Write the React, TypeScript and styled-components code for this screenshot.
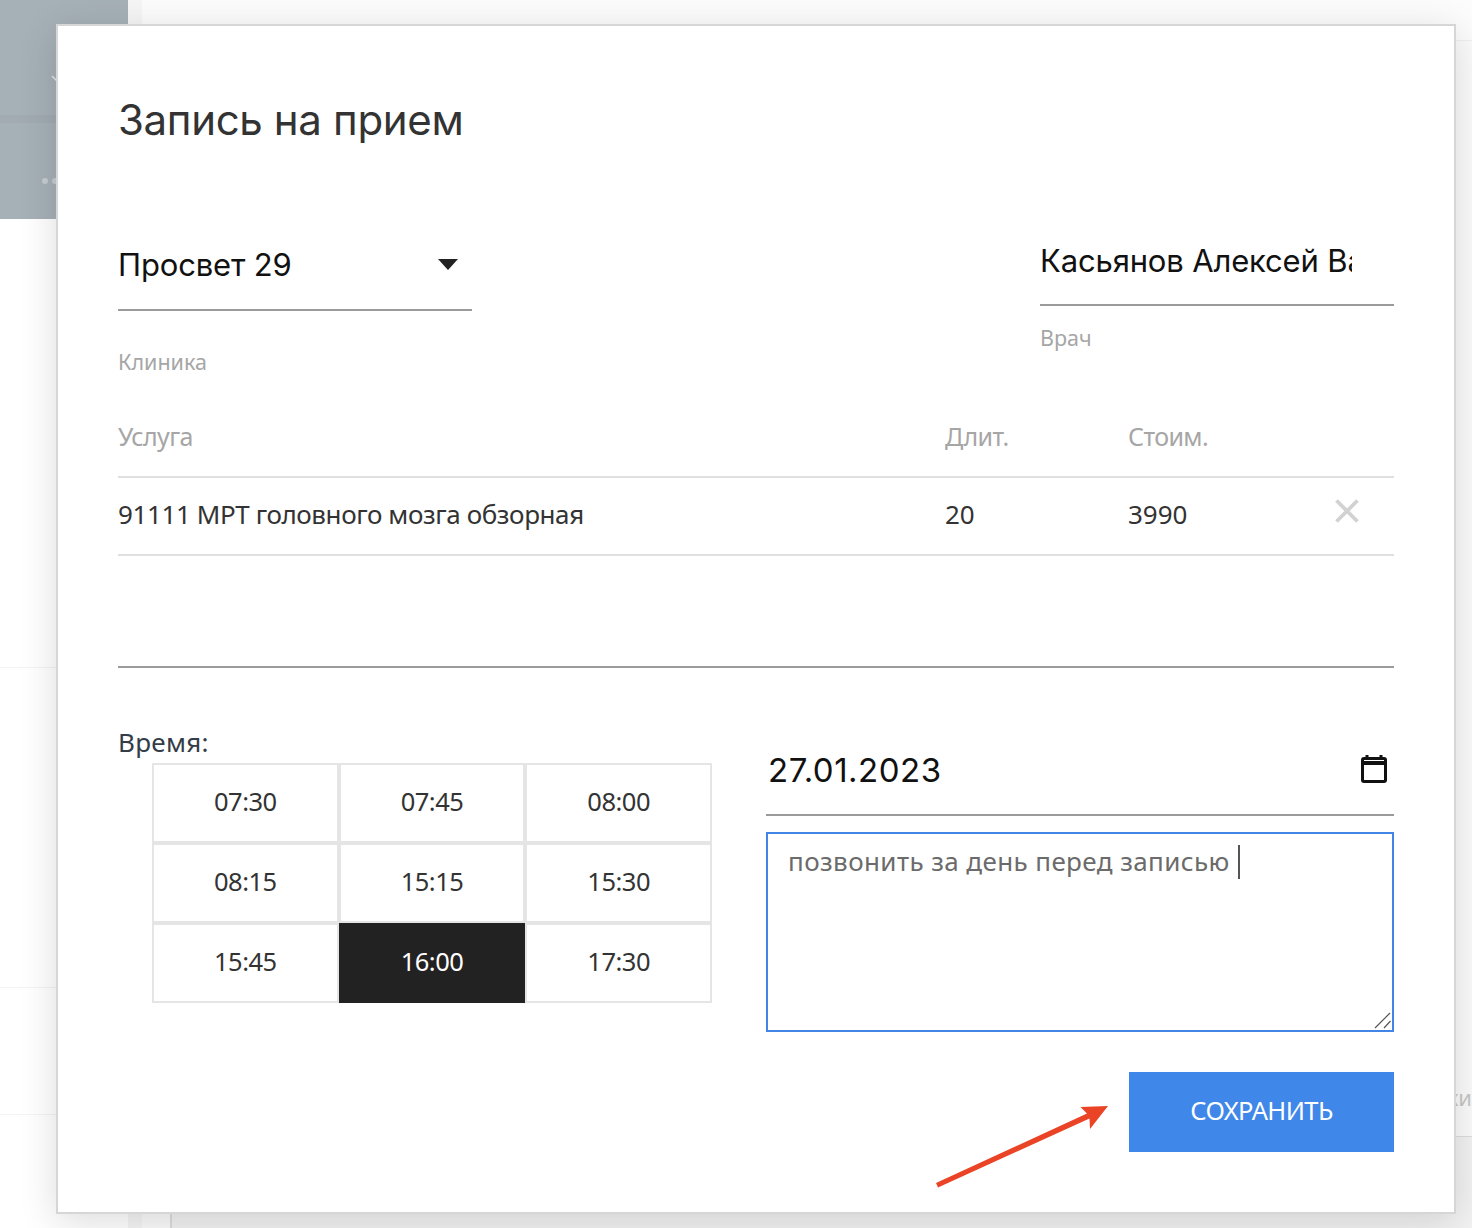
import React from "react";
import styled, { createGlobalStyle } from "styled-components";

const Global = createGlobalStyle`
  html, body { margin: 0; padding: 0; background: #fbfbfb; }
  * { box-sizing: border-box; }
`;

const body = `"Noto Sans", "Open Sans", sans-serif`;
const ui = `Inter, Roboto, sans-serif`;

const Page = styled.div`
  position: relative;
  width: 1472px;
  height: 1228px;
  overflow: hidden;
  font-family: ${body};
`;

const Backdrop = styled.div`
  display: grid;
  grid-template-columns: 128px 14px 1fr;
  height: 100%;
`;

const Sidebar = styled.div`
  display: flex;
  flex-direction: column;
  background: #fff;
`;

const SidePanel = styled.div`
  height: 219px;
  background: #a6b0b7;
  padding: 75px 0 0 42px;
  display: flex;
  flex-direction: column;
`;

const Chevron = styled.svg`
  display: block;
  margin-left: 9px;
`;

const SideBand = styled.div`
  height: 8px;
  margin: 32px -42px 0 -42px;
  background: #a1abb1;
`;

const Dots = styled.div`
  display: flex;
  gap: 4px;
  margin-top: 55px;
`;

const Dot = styled.span`
  width: 6px;
  height: 6px;
  border-radius: 50%;
  background: #c6cdd1;
`;

const SideRow = styled.div<{ $h: number }>`
  height: ${(p) => p.$h}px;
  border-bottom: 1px solid #f3f3f3;
`;

const Gutter = styled.div`
  background: #f5f5f5;
`;

const Main = styled.div`
  display: flex;
  flex-direction: column;
  background: #fbfbfb;
`;

const TopBar = styled.div`
  height: 41px;
  border-bottom: 1px solid #f0f0f0;
  background: #fcfcfc;
`;

const MainBody = styled.div`
  flex: 1;
  display: flex;
  flex-direction: column;
  justify-content: flex-end;
`;

const ListRow = styled.div`
  height: 59px;
  display: flex;
  justify-content: flex-end;
  align-items: flex-start;
  border-bottom: 1px solid #ddd;
  color: #c8c8c8;
  font-size: 22px;
  line-height: 30px;
  white-space: nowrap;
  padding-top: 4px;
`;

const ListEnd = styled.div`
  height: 91px;
  border-left: 2px solid #ddd;
  margin-left: 28px;
  background: #f2f2f2;
`;

const Modal = styled.div`
  position: absolute;
  left: 56px;
  top: 24px;
  width: 1400px;
  height: 1190px;
  background: #fff;
  border: 2px solid #d6d6d6;
  box-shadow: 0 8px 36px rgba(0, 0, 0, 0.14);
  padding: 0 60px;
  display: flex;
  flex-direction: column;
`;

const Title = styled.h1`
  margin: 64px 0 0;
  height: 60px;
  font: 400 42px/60px ${ui};
  letter-spacing: -0.35px;
  color: #333;
`;

const TopFields = styled.div`
  display: flex;
  justify-content: space-between;
  align-items: flex-start;
  margin-top: 78px;
  height: 180px;
`;

const Field = styled.div`
  width: 354px;
  display: flex;
  flex-direction: column;
`;

const SelectBox = styled.div<{ $h: number; $lh: number }>`
  height: ${(p) => p.$h}px;
  border-bottom: 2px solid #9b9b9b;
  display: flex;
  align-items: flex-start;
  justify-content: space-between;
  font: 400 31px/${(p) => p.$lh}px ${ui};
  letter-spacing: -0.15px;
  color: #111;
`;

const Clipped = styled.span`
  width: 312px;
  overflow: hidden;
  white-space: nowrap;
`;

const Caret = styled.svg`
  margin: 31px 14px 0 0;
  flex: none;
`;

const Hint = styled.label<{ $mt: number }>`
  margin-top: ${(p) => p.$mt}px;
  font-size: 21.5px;
  line-height: 30px;
  color: #a6a6a6;
`;

const TableRow = styled.div<{ $h: number; $pb: number }>`
  display: grid;
  grid-template-columns: 827px 183px 1fr 60px;
  height: ${(p) => p.$h}px;
  padding-bottom: ${(p) => p.$pb}px;
  border-bottom: 2px solid #e0e0e0;
  align-items: center;
  font-size: 26px;
  color: #333;
`;

const HeadCell = styled.span`
  font-size: 25px;
  letter-spacing: -0.6px;
  color: #a6a6a6;
`;

const ServiceName = styled.span`
  letter-spacing: -0.4px;
`;

const Remove = styled.svg`
  justify-self: start;
  position: relative;
  top: -3px;
`;

const Divider = styled.div`
  margin-top: 110px;
  border-top: 2px solid #9b9b9b;
`;

const Columns = styled.div`
  display: grid;
  grid-template-columns: 594px 628px;
  justify-content: space-between;
  margin-top: 57px;
`;

const TimeLabel = styled.div`
  height: 38px;
  font-size: 26px;
  line-height: 34px;
  letter-spacing: 0.3px;
  color: #333c48;
`;

const TimeGrid = styled.div`
  display: grid;
  width: 560px;
  grid-template-columns: repeat(3, 1fr);
  grid-auto-rows: 80px;
  margin-left: 34px;
`;

const Slot = styled.button<{ $on?: boolean }>`
  border: 2px solid ${(p) => (p.$on ? "#222" : "#e5e5e5")};
  background: ${(p) => (p.$on ? "#222" : "#fff")};
  color: ${(p) => (p.$on ? "#fff" : "#333")};
  font: 400 25.5px ${body};
  letter-spacing: -0.5px;
  padding: 0 0 4px;
`;

const DateBox = styled.div`
  height: 78px;
  margin-top: 13px;
  border-bottom: 2px solid #9b9b9b;
  display: flex;
  justify-content: space-between;
  align-items: flex-start;
  padding: 0 7px 0 2px;
  font: 400 33px/64px ${ui};
  letter-spacing: 0.5px;
  color: #111;
`;

const CalendarIcon = styled.svg`
  margin-top: 16px;
`;

const Note = styled.div`
  position: relative;
  margin-top: 16px;
  height: 200px;
  border: 2px solid #4285e4;
  padding: 8px 20px;
  font-size: 26px;
  line-height: 38px;
  letter-spacing: 0.4px;
  color: #6b6b6b;
`;

const TextCaret = styled.span`
  display: inline-block;
  width: 2px;
  height: 34px;
  margin-left: 8px;
  background: #555;
  vertical-align: -8px;
`;

const ResizeGrip = styled.svg`
  position: absolute;
  right: 0;
  bottom: 0;
`;

const Actions = styled.div`
  display: flex;
  justify-content: flex-end;
  margin-top: 40px;
`;

const Save = styled.button`
  width: 265px;
  height: 80px;
  border: 0;
  background: #3f87e8;
  color: #fff;
  font: 400 25.5px ${body};
  letter-spacing: -0.6px;
  padding: 0 0 4px;
`;

const Arrow = styled.svg`
  position: absolute;
  left: 930px;
  top: 1100px;
`;

const slots = ["07:30", "07:45", "08:00", "08:15", "15:15", "15:30", "15:45", "16:00", "17:30"];

export default function App() {
  return (
    <Page>
      <Global />
      <Backdrop>
        <Sidebar>
          <SidePanel>
            <Chevron width="8" height="8" viewBox="0 0 8 8">
              <path d="M1 1l5 5" stroke="#e6eaec" strokeWidth="1.4" fill="none" />
            </Chevron>
            <SideBand />
            <Dots>
              <Dot />
              <Dot />
            </Dots>
          </SidePanel>
          <SideRow $h={449} />
          <SideRow $h={320} />
          <SideRow $h={127} />
        </Sidebar>
        <Gutter />
        <Main>
          <TopBar />
          <MainBody>
            <ListRow>заявки</ListRow>
            <ListEnd />
          </MainBody>
        </Main>
      </Backdrop>
      <Modal>
        <Title>Запись на прием</Title>
        <TopFields>
          <Field>
            <SelectBox $h={83} $lh={74}>
              <span>Просвет 29</span>
              <Caret width="20" height="12" viewBox="0 0 20 12">
                <path d="M0 0h20L10 11z" fill="#222" />
              </Caret>
            </SelectBox>
            <Hint $mt={36}>Клиника</Hint>
          </Field>
          <Field>
            <SelectBox $h={78} $lh={66}>
              <Clipped>Касьянов Алексей Валерьевич</Clipped>
            </SelectBox>
            <Hint $mt={17}>Врач</Hint>
          </Field>
        </TopFields>
        <TableRow $h={70} $pb={12}>
          <HeadCell>Услуга</HeadCell>
          <HeadCell>Длит.</HeadCell>
          <HeadCell>Стоим.</HeadCell>
        </TableRow>
        <TableRow $h={78} $pb={4}>
          <ServiceName>91111 МРТ головного мозга обзорная</ServiceName>
          <span>20</span>
          <span>3990</span>
          <Remove width="26" height="26" viewBox="0 0 26 26">
            <path d="M2.5 2.500l21 21M23.500 2.500l-21 21" stroke="#d2d2d2" strokeWidth="3.8" fill="none" />
          </Remove>
        </TableRow>
        <Divider />
        <Columns>
          <div>
            <TimeLabel>Время:</TimeLabel>
            <TimeGrid>
              {slots.map((s) => (
                <Slot key={s} $on={s === "16:00"}>
                  {s}
                </Slot>
              ))}
            </TimeGrid>
          </div>
          <div>
            <DateBox>
              <span>27.01.2023</span>
              <CalendarIcon width="26" height="30" viewBox="0 0 26 30">
                <path d="M6 1v4M20 1v4" stroke="#111" strokeWidth="3" />
                <rect x="1.5" y="4.5" width="23" height="23" rx="1.5" fill="none" stroke="#111" strokeWidth="3" />
                <path d="M1 7h24v4H1z" fill="#111" />
              </CalendarIcon>
            </DateBox>
            <Note>
              позвонить за день перед записью
              <TextCaret />
              <ResizeGrip width="18" height="18" viewBox="0 0 18 18">
                <path d="M1 16L16 1M10 16l6.500-7" stroke="#555" strokeWidth="1.2" fill="none" />
              </ResizeGrip>
            </Note>
            <Actions>
              <Save>СОХРАНИТЬ</Save>
            </Actions>
          </div>
        </Columns>
      </Modal>
      <Arrow width="182" height="92" viewBox="930 1100 182 92">
        <path
          d="M936 1183L1087 1113.500L1080.500 1107L1108 1106L1090 1129L1089.500 1118.500L938 1187.500z"
          fill="#ea4326"
        />
      </Arrow>
    </Page>
  );
}
